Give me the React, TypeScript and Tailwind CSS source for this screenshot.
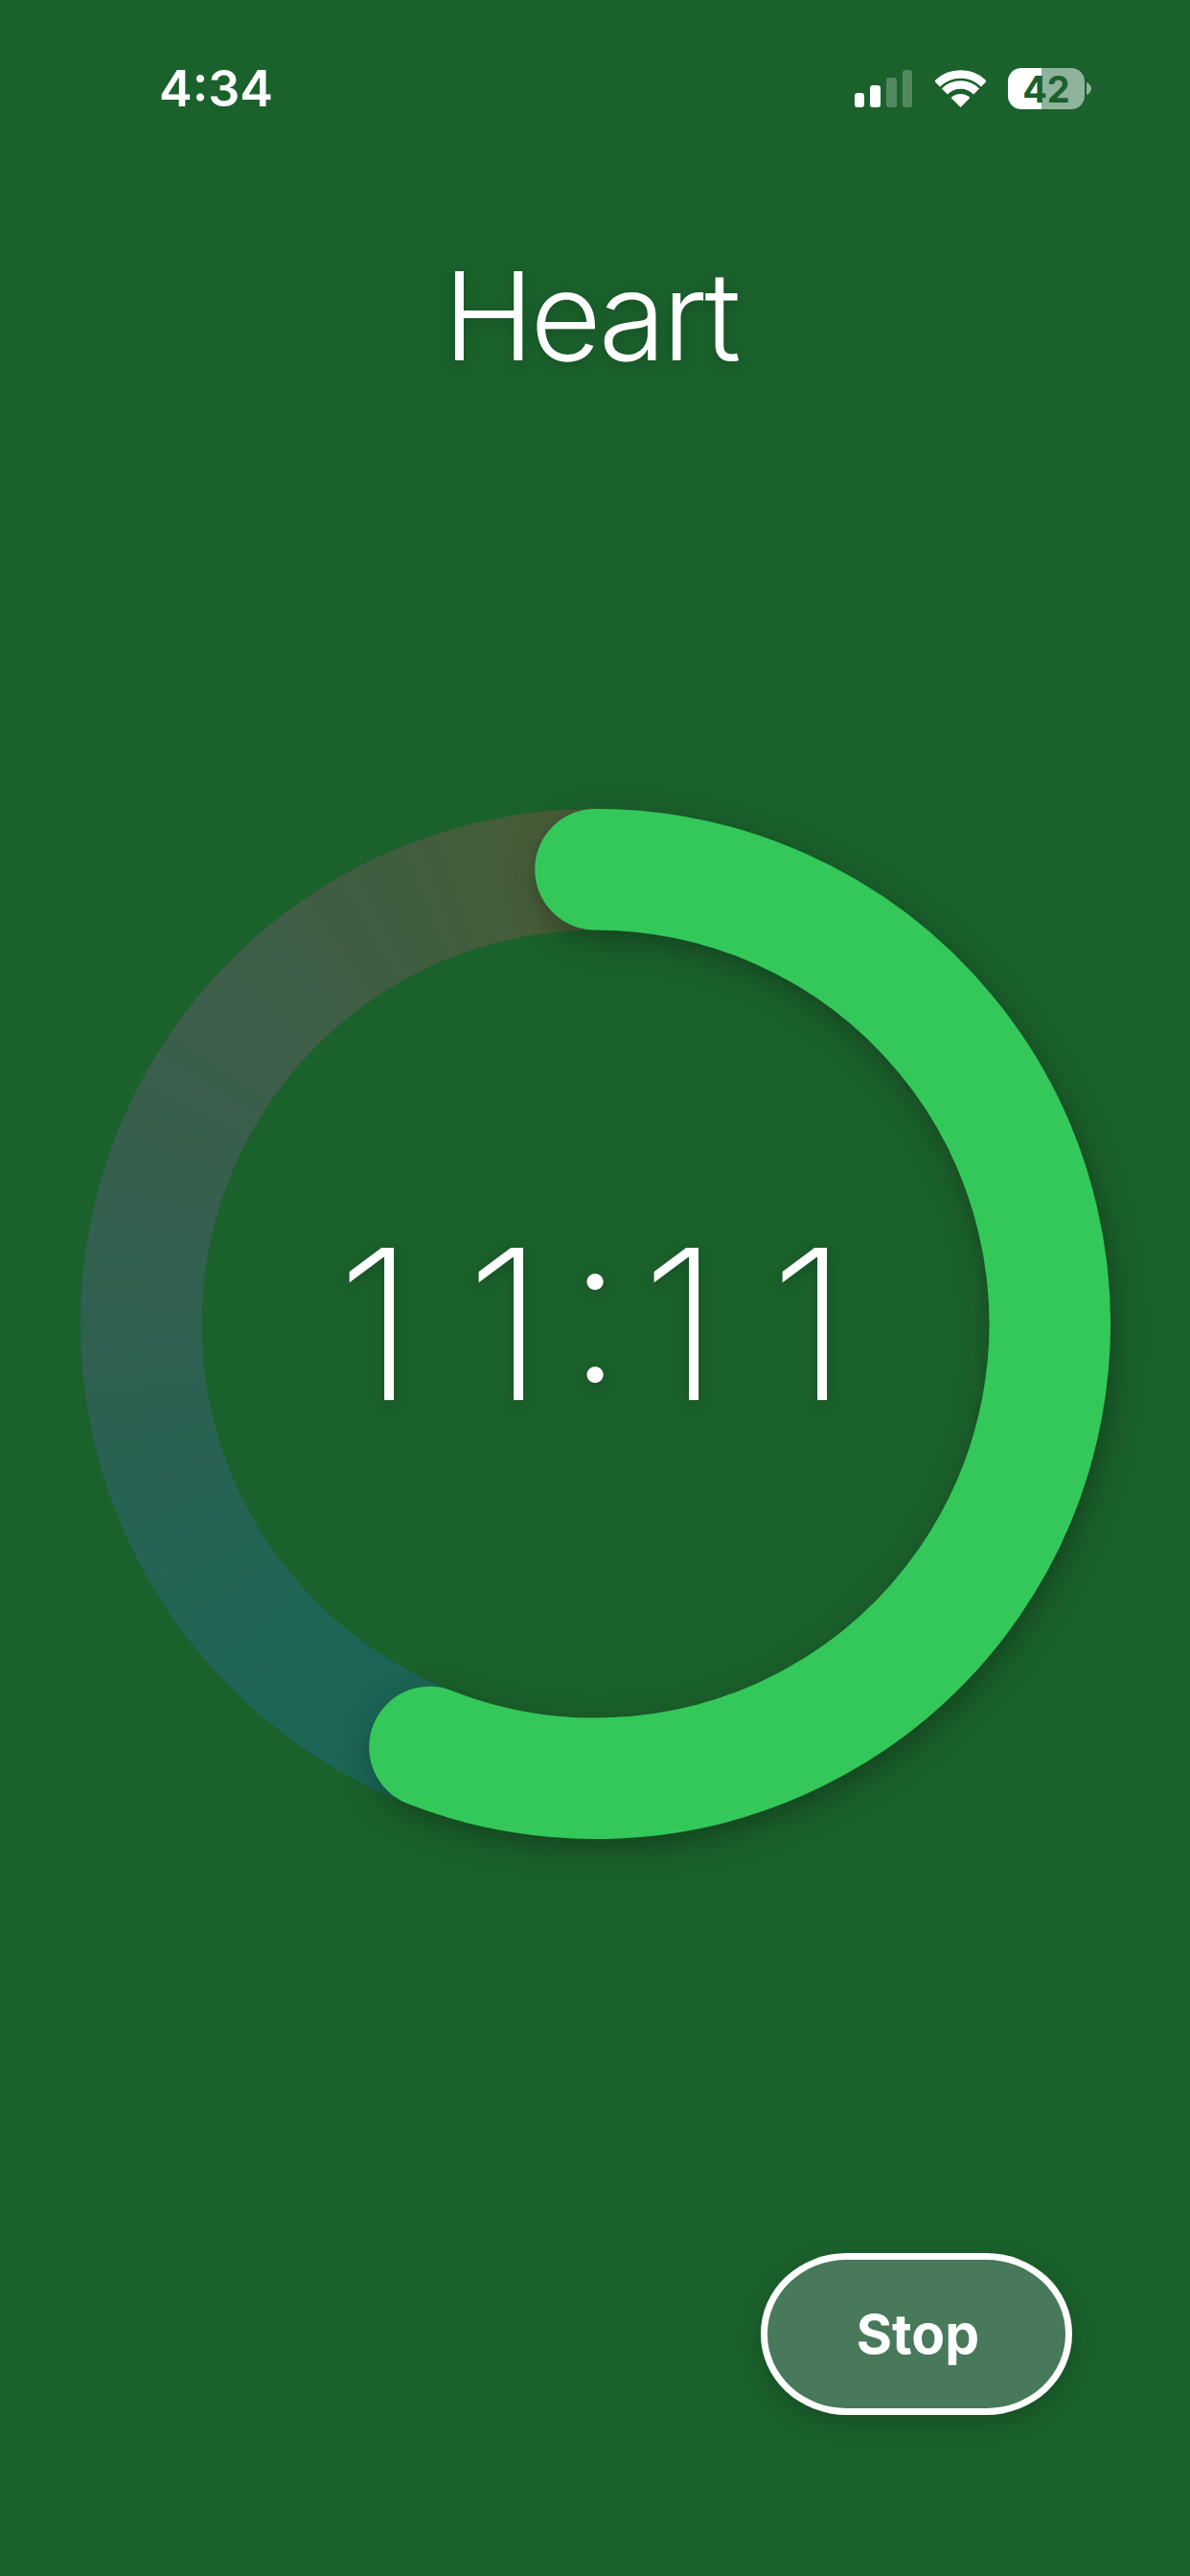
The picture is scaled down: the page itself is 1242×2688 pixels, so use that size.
const center = 537.5
const radius = 474.25
const endAngle = 201.4

function point(angle: number, r = radius) {
  const a = (angle * Math.PI) / 180
  return [center + r * Math.sin(a), center - r * Math.cos(a)]
}

// track colour stops, clockwise from the end of the green arc up to 12 o'clock
const stops: [number, number[]][] = [
  [200, [26, 102, 88]],
  [230, [33, 100, 85]],
  [270, [48, 96, 80]],
  [310, [62, 94, 74]],
  [340, [66, 93, 62]],
  [360, [74, 92, 54]],
]

function trackColor(angle: number) {
  for (let i = 0; i < stops.length - 1; i++) {
    const [a0, c0] = stops[i]
    const [a1, c1] = stops[i + 1]
    if (angle <= a1) {
      const t = (angle - a0) / (a1 - a0)
      return `rgb(${c0.map((c, j) => Math.round(c + (c1[j] - c) * t)).join(',')})`
    }
  }
  return 'rgb(74,92,54)'
}

const segments = Array.from({ length: 80 }, (_, i) => 200 + i * 2)

function Ring() {
  const [sx, sy] = point(0)
  const [ex, ey] = point(endAngle)
  return (
    <svg viewBox="0 0 1075 1075" className="w-full h-full overflow-visible">
      {segments.map((a) => {
        const [x0, y0] = point(a)
        const [x1, y1] = point(Math.min(a + 2.4, 360))
        return (
          <path
            key={a}
            d={`M${x0} ${y0}A${radius} ${radius} 0 0 1 ${x1} ${y1}`}
            fill="none"
            stroke={trackColor(a)}
            strokeWidth="126.5"
          />
        )
      })}
      <path
        d={`M${sx} ${sy}A${radius} ${radius} 0 1 1 ${ex} ${ey}`}
        fill="none"
        stroke="#34c85a"
        strokeWidth="126.5"
        strokeLinecap="round"
        className="drop-shadow-[4px_10px_16px_rgba(0,0,0,0.3)]"
      />
    </svg>
  )
}

function StatusIcons() {
  return (
    <div className="flex items-center">
      <div className="flex items-end gap-[6px] h-[39px]">
        <div className="w-[10px] h-[15px] rounded-[3px] bg-white" />
        <div className="w-[11px] h-[23px] rounded-[3px] bg-white" />
        <div className="w-[11px] h-[31px] rounded-[3px] bg-white/25" />
        <div className="w-[10px] h-[39px] rounded-[3px] bg-white/25" />
      </div>
      <svg viewBox="0 0 53 39" className="w-[53px] h-[39px] ml-[24px]" fill="none" stroke="white" strokeWidth="8.5">
        <path d="M2.1 14.6A34.5 34.5 0 0 1 50.9 14.6" />
        <path d="M9.9 22.4A23.5 23.5 0 0 1 43.1 22.4" />
        <path d="M26.5 39L16.6 29.1A14 14 0 0 1 36.4 29.1Z" fill="white" stroke="none" />
      </svg>
      <div className="ml-[23px] w-[80px] h-[43px] rounded-[14px] flex items-center justify-center bg-[linear-gradient(90deg,#ffffff_44%,#8fb39b_44%)] text-[#1b612c] text-[38px] font-bold leading-none">
        42
      </div>
      <svg viewBox="0 0 5 13" className="w-[5px] h-[13px] ml-[2px]">
        <path d="M0 0C3 1 5 4 5 6.5C5 9 3 12 0 13Z" fill="#8fb39b" />
      </svg>
    </div>
  )
}

export default function App() {
  return (
    <div className="w-[1242px] h-[2688px] bg-[#1b612c] text-white flex flex-col font-['Inter',sans-serif] overflow-hidden">
      <div className="flex items-center justify-between h-[39px] mt-[73px] pl-[166px] pr-[103px]">
        <span className="text-[52px] font-semibold leading-none">4:34</span>
        <StatusIcons />
      </div>

      <h1 className="mt-[143px] pr-[10px] text-center text-[128px] font-light leading-[150px] tracking-[-4px] [text-shadow:0_4px_14px_rgba(0,0,0,0.2)]">
        Heart
      </h1>

      <div className="relative w-[1075px] h-[1075px] mt-[439px] ml-[84px]">
        <Ring />
        <div className="absolute inset-0 flex items-center justify-center text-[218px] font-extralight leading-none [text-shadow:0_4px_14px_rgba(0,0,0,0.2)]">
          <span className="w-[135px] text-center -translate-x-[3px]">1</span>
          <span className="w-[135px] text-center -translate-x-[3px]">1</span>
          <span className="w-[47px] text-center -translate-x-[7px] -translate-y-[19px]">:</span>
          <span className="w-[135px] text-center -translate-x-[2px]">1</span>
          <span className="w-[135px] text-center -translate-x-[3px]">1</span>
        </div>
      </div>

      <div className="flex justify-end mt-[432px] pr-[123px]">
        <button className="w-[325px] h-[169px] pl-[3px] rounded-[90px/84px] border-[7px] border-white bg-[#47795a] text-[57px] font-bold shadow-[0_8px_24px_rgba(0,0,0,0.2)]">
          Stop
        </button>
      </div>
    </div>
  )
}
